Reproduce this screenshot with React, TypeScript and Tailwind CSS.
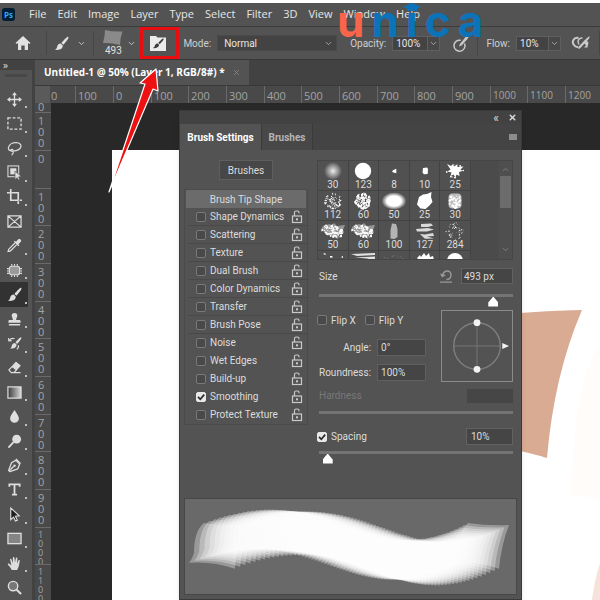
import React from "react";
import clsx from "clsx";
import { ChevronDown, ChevronUp, X } from "lucide-react";

const MENU = ["File", "Edit", "Image", "Layer", "Type", "Select", "Filter", "3D", "View", "Window", "Help"];

const H_TICKS = ["100", "0", "100", "200", "300", "400", "500", "600", "700", "800", "900", "1000", "1100", "1200"];
const V_TICKS = ["100", "0", "100", "200", "300", "400", "500", "600", "700", "800", "900", "1000", "1100"];

const OPTIONS = [
  { name: "Shape Dynamics", line: true },
  { name: "Scattering", line: true },
  { name: "Texture", line: true },
  { name: "Dual Brush", line: true },
  { name: "Color Dynamics", line: true },
  { name: "Transfer", line: true },
  { name: "Brush Pose", line: true },
  { name: "Noise" },
  { name: "Wet Edges" },
  { name: "Build-up" },
  { name: "Smoothing", checked: true },
  { name: "Protect Texture" },
];

const BRUSHES = [
  { kind: "soft", size: "30" },
  { kind: "hard", size: "123" },
  { kind: "tiny", size: "8" },
  { kind: "small", size: "10" },
  { kind: "splat", size: "25" },
  { kind: "grain", size: "112" },
  { kind: "round", size: "60" },
  { kind: "oval", size: "50" },
  { kind: "blob", size: "25" },
  { kind: "sponge", size: "30" },
  { kind: "rough", size: "50" },
  { kind: "rough", size: "60" },
  { kind: "finger", size: "100" },
  { kind: "dry", size: "127" },
  { kind: "spray", size: "284" },
  { kind: "dots", size: "" },
  { kind: "streak", size: "" },
  { kind: "faint", size: "" },
  { kind: "leaves", size: "" },
  { kind: "dome", size: "" },
];

// small repeatable noise, so the speckled tips look the same on each render
const noise = (n: number) => {
  const v = Math.sin(n * 127.1 + 11.7) * 43758.5453;
  return v - Math.floor(v);
};

const TOOLS: { name: string; icon: React.ReactNode; more?: boolean }[] = [
  {
    name: "Move", more: true,
    icon: (
      <g fill="currentColor" stroke="none">
        <path d="M7.300 3h1.400v10H7.300zM3 7.300h10v1.400H3z" />
        <path d="M8 0l2.600 3.400H5.400zM8 16l2.600-3.400H5.400zM0 8l3.400-2.600v5.200zM16 8l-3.400-2.600v5.200z" />
      </g>
    ),
  },
  { name: "Marquee", more: true, icon: <rect x="1" y="2" width="14" height="12" strokeDasharray="3 2" strokeWidth="1.4" /> },
  {
    name: "Lasso", more: true,
    icon: <path d="M5.5 10.6C2.5 10.8 1 9 1.6 6.8 2.4 3.6 6 1.6 10 1.8c3.400.2 5.400 2 4.900 4.200-.6 3-4.600 4.900-8.600 4.400M6.300 10.400c.4-1.700-2-2-2.200-.6-.1 1.400 2.800.8 2.600 2.600-.2 1.300-1.300 1.500-1.500 2.800" strokeWidth="1.3" />,
  },
  {
    name: "Object selection", more: true,
    icon: (
      <>
        <rect x="1" y="1" width="11.500" height="11.500" strokeWidth="1.100" />
        <rect x="3.500" y="3.500" width="6.500" height="6.500" fill="currentColor" stroke="none" />
        <path d="M8.500 6.500v9l2.300-2 1.600 2.500 1.400-.9-1.500-2.400 3-.5z" fill="currentColor" stroke="#535353" strokeWidth=".7" />
      </>
    ),
  },
  { name: "Crop", more: true, icon: <path d="M4 0v12h8.500M0 4h3M5 4h7v7.500M12 13v3M13.500 12H16" strokeWidth="1.800" /> },
  { name: "Frame", icon: <path d="M1 2h14v12H1zM1 2l14 12M15 2L1 14" strokeWidth="1.300" /> },
  {
    name: "Eyedropper", more: true,
    icon: (
      <>
        <path d="M8.500 5.300L2.200 11.600c-.8.8-.5 1.500-1 2.700 1.200-.2 2 0 2.700-.7l6.500-6.500" strokeWidth="1.300" />
        <path d="M7.300 4l1-1 1.300 1L12 1.400c1.600-1.500 4.200 1 2.700 2.700L12.200 6.600l1 1.300-1 1z" fill="currentColor" stroke="none" />
      </>
    ),
  },
  {
    name: "Healing patch", more: true,
    icon: (
      <>
        <rect x="2.500" y="3.500" width="11" height="9" rx="2.500" fill="#9a9a9a" strokeWidth="1.200" />
        <path d="M5 1v2M8 1v2M11 1v2M5 13v2M8 13v2M11 13v2M0 6h2M0 8.500h2M0 11h2M14 6h2M14 8.500h2M14 11h2" strokeWidth="1.200" />
      </>
    ),
  },
  {
    name: "Brush", more: true,
    icon: (
      <g fill="currentColor" stroke="none">
        <path d="M15.300 1c.8.800-1 3.300-5.300 8.300L7.900 7.400C11.800 3 14.500.2 15.300 1z" />
        <path d="M7.200 8.100l2.100 2c.5 3.200-3.600 5.600-8.300 4.400 2.400-.9 1.900-2.300 2.800-4.300.6-1.400 2-2.200 3.400-2.100z" />
      </g>
    ),
  },
  {
    name: "Clone stamp", more: true,
    icon: <path d="M8 1a3 3 0 013 3c0 1.700-1.300 2.500-1.300 4.500H13c1 0 1.500.6 1.500 1.500v1.500h-13V10c0-.9.500-1.500 1.500-1.500h3.300C6.300 6.500 5 5.700 5 4a3 3 0 013-3zM2 12.800h12v1.600H2z" fill="currentColor" stroke="none" />,
  },
  {
    name: "History brush", more: true,
    icon: (
      <>
        <path d="M15.300 1.500c.6.600-.9 2.900-4.500 6.900L9 6.700c3.300-3.700 5.700-5.800 6.300-5.200zM8.400 7.400l1.800 1.700c.3 2.900-3.200 4.900-7 4.200 2-.9 1.500-2.200 2.300-3.900.5-1.200 1.700-2 2.900-2z" fill="currentColor" stroke="none" />
        <path d="M2 5c1.500-2.500 3.700-3 6-2M1.600 2.200L2 5.200l3-.3M12 10c.8 1.500 0 3-1.500 4.200" strokeWidth="1.200" />
      </>
    ),
  },
  {
    name: "Eraser", more: true,
    icon: (
      <>
        <path d="M9.600 2.500l4.400 3.600-4 4.400L5.500 7z" fill="currentColor" strokeWidth="1.200" strokeLinejoin="round" />
        <path d="M5.500 7L2 10.600l2.500 2.900h3L10 10.500M7 13.500h7.500" strokeWidth="1.300" strokeLinejoin="round" />
      </>
    ),
  },
  {
    name: "Gradient", more: true,
    icon: (
      <>
        <defs>
          <linearGradient id="tool-gradient">
            <stop offset="0" stopColor="#3a3a3a" />
            <stop offset="1" stopColor="#d8d8d8" />
          </linearGradient>
        </defs>
        <rect x="1" y="2" width="14" height="12" fill="url(#tool-gradient)" strokeWidth="1.300" />
      </>
    ),
  },
  { name: "Blur", more: true, icon: <path d="M8 1c2 3.500 4.700 6 4.700 9a4.700 4.700 0 01-9.400 0C3.300 7 6 4.500 8 1z" fill="currentColor" stroke="none" /> },
  {
    name: "Dodge", more: true,
    icon: (
      <>
        <circle cx="10.300" cy="5.500" r="4.700" fill="currentColor" stroke="none" />
        <path d="M7 8.700L1.500 14.500" strokeWidth="2" />
      </>
    ),
  },
  {
    name: "Pen", more: true,
    icon: (
      <>
        <path d="M9.500 2.500l4 4-2 5L3 14.500 1.700 13.200 5 4.800z" strokeWidth="1.400" strokeLinejoin="round" />
        <path d="M2 14l5-5M9.500 1l5 5" strokeWidth="1.500" />
        <circle cx="8" cy="8.300" r="1.300" fill="currentColor" stroke="none" />
      </>
    ),
  },
  { name: "Type", more: true, icon: <path d="M2.500 5V2.500h11V5M8 2.500v11M5.300 13.500h5.400" strokeWidth="1.900" /> },
  { name: "Path selection", more: true, icon: <path d="M4 1v12.500l3-2.700 2 4.200 2-1-2-4.200 4-.3z" fill="#1d1d1d" strokeWidth="1.200" /> },
  { name: "Rectangle", more: true, icon: <rect x="1" y="2.500" width="14" height="11" fill="#858585" strokeWidth="1.400" /> },
  {
    name: "Hand", more: true,
    icon: (
      <path d="M5 14.800C4 13 2.800 11 1 9.300c-.5-1 .7-1.700 1.500-1L4.700 10 3.300 4c-.2-1.300 1.300-1.500 1.600-.4l1.400 4L6.200 2c0-1.300 1.700-1.300 1.800 0l.5 5.300.9-4.900c.3-1.200 1.800-.9 1.700.3l-.5 5.500 1.500-3.500c.5-1 1.800-.5 1.500.6-.6 3-.6 6-2.800 9.500z" fill="currentColor" stroke="none" />
    ),
  },
  {
    name: "Zoom",
    icon: (
      <>
        <circle cx="6.500" cy="6.500" r="5" fill="#777" strokeWidth="1.500" />
        <path d="M10.300 10.300l4.700 4.700" strokeWidth="2.200" />
      </>
    ),
  },
];

function Icon({ className, children }: { className?: string; children: React.ReactNode }) {
  return (
    <svg viewBox="0 0 16 16" fill="none" stroke="currentColor" aria-hidden="true" className={clsx("shrink-0 overflow-visible", className)}>
      {children}
    </svg>
  );
}

function BrushGlyph({ className }: { className?: string }) {
  return (
    <Icon className={className}>
      <path d="M15.300 1c.8.800-1 3.300-5.300 8.300L7.900 7.400C11.800 3 14.500.2 15.300 1z" fill="currentColor" stroke="none" />
      <path d="M7.200 8.100l2.100 2c.5 3.200-3.600 5.600-8.300 4.400 2.400-.9 1.900-2.300 2.800-4.300.6-1.400 2-2.200 3.400-2.100z" fill="currentColor" stroke="none" />
    </Icon>
  );
}

function Checkbox({ id, checked }: { id: string; checked?: boolean }) {
  return (
    <span className="relative flex h-[10px] w-[10px] shrink-0">
      <input
        id={id}
        type="checkbox"
        defaultChecked={checked}
        className="peer h-full w-full appearance-none rounded-[2px] border border-[#7a7a7a] bg-[#494949] checked:border-[#e8e8e8] checked:bg-[#e8e8e8]"
      />
      <svg viewBox="0 0 10 10" fill="none" aria-hidden="true" className="pointer-events-none absolute inset-0 hidden peer-checked:block">
        <path d="M2 4.800l2.300 2.500L8.200 2.600" stroke="#2b2b2b" strokeWidth="1.700" />
      </svg>
    </span>
  );
}

function LockButton({ label }: { label: string }) {
  return (
    <button type="button" aria-label={"Lock " + label} className="text-[#c9c9c9]">
      <svg viewBox="0 0 12 14" fill="none" stroke="currentColor" className="h-[14px] w-[12px]">
        <rect x="1.500" y="6" width="9" height="6.500" strokeWidth="1.200" />
        <path d="M3.500 6V2.500c0-1 .5-1.500 1.500-1.500h1.500C7.500 1 8 1.500 8 2.500V3.300" strokeWidth="1.200" />
        <rect x="5" y="8.300" width="2" height="2" fill="currentColor" stroke="none" />
      </svg>
    </button>
  );
}

function Slider({ label, value, off }: { label: string; value: number; off?: boolean }) {
  return (
    <input
      type="range"
      aria-label={label}
      defaultValue={value}
      disabled={off}
      className={clsx(
        "block h-[14px] w-full appearance-none bg-transparent [&::-webkit-slider-runnable-track]:h-[3px] [&::-webkit-slider-runnable-track]:bg-[#747474]",
        "[&::-webkit-slider-thumb]:mt-[3px] [&::-webkit-slider-thumb]:h-[10px] [&::-webkit-slider-thumb]:w-[10px] [&::-webkit-slider-thumb]:appearance-none [&::-webkit-slider-thumb]:bg-white [&::-webkit-slider-thumb]:[clip-path:polygon(50%_0,100%_60%,100%_100%,0_100%,0_60%)]",
        off && "[&::-webkit-slider-thumb]:opacity-0"
      )}
    />
  );
}

function Speckle({ seed, count, rx, ry, r, tilt = 0 }: { seed: number; count: number; rx: number; ry: number; r: number; tilt?: number }) {
  return (
    <g fill="#fff">
      {Array.from({ length: count }, (_, i) => {
        const a = noise(seed + i) * Math.PI * 2;
        const d = Math.sqrt(noise(seed + i + 500));
        const x = Math.cos(a) * d * rx;
        return <circle key={i} cx={12 + x} cy={9 + Math.sin(a) * d * ry + x * tilt} r={r * (0.4 + noise(seed + i + 900))} />;
      })}
    </g>
  );
}

function BrushTip({ kind }: { kind: string }) {
  switch (kind) {
    case "soft":
      return (
        <>
          <defs>
            <radialGradient id="soft-tip">
              <stop offset="0" stopColor="#fff" stopOpacity=".9" />
              <stop offset=".5" stopColor="#fff" stopOpacity=".45" />
              <stop offset="1" stopColor="#fff" stopOpacity="0" />
            </radialGradient>
          </defs>
          <circle cx="12" cy="9" r="9" fill="url(#soft-tip)" />
        </>
      );
    case "hard":
      return <circle cx="12" cy="9" r="8.200" fill="#fff" />;
    case "tiny":
      return <path d="M10 9.500l1.300-1.500 3-1.200v4.500l-3-.8z" fill="#fff" />;
    case "small":
      return <path d="M10 6l4-.5 1 1.500-.3 5-3.700.3-1.500-1.500z" fill="#fff" />;
    case "splat":
      return (
        <g fill="#fff">
          <path d="M4 2l4 2 2-2 1 2.500 3-2 .5 2.500 6-.5-3 3 2 1.500-3.500 1 .5 4-3-1.500-1 3-2-3-3 1.500 1-3.500-4-1 3-2z" />
          <Speckle seed={4} count={14} rx={9} ry={7} r={0.8} />
        </g>
      );
    case "grain":
      return <Speckle seed={20} count={120} rx={9} ry={8} r={0.5} />;
    case "round":
      return <Speckle seed={61} count={190} rx={8} ry={8} r={0.7} />;
    case "oval":
      return (
        <>
          <defs>
            <radialGradient id="oval-tip">
              <stop offset=".6" stopColor="#fff" />
              <stop offset="1" stopColor="#fff" stopOpacity=".1" />
            </radialGradient>
          </defs>
          <ellipse cx="12" cy="9" rx="12" ry="8.500" fill="url(#oval-tip)" />
        </>
      );
    case "blob":
      return <path d="M6 5l4-2.500 4-.5 4.500-2-.5 5 1.500 5-3.500 4-3.500 3-5-.5-3.500-4z" fill="#fff" />;
    case "sponge":
      return (
        <g>
          <rect x="5.500" y="1.500" width="13" height="15" rx="4" fill="#bdbdbd" />
          <Speckle seed={90} count={50} rx={6} ry={7} r={0.9} />
        </g>
      );
    case "rough":
      return (
        <g>
          <path d="M1 5l7-3 3 1 2-2 3 3 8-1-2 5 1 3-5 2-1 4-6-3-5-1-4-4-2 1z" fill="#cfcfcf" opacity=".55" />
          <Speckle seed={130} count={90} rx={11} ry={6} r={0.8} tilt={0.2} />
        </g>
      );
    case "finger":
      return <path d="M10 1.500l4 .5 1.500 5v8l-3 2-4-.5V8z" fill="#b4b4b4" />;
    case "dry":
      return <path d="M8 2l10-.5 2 2-5 1.500-7 0zM3 7l12-1 6 1.500-7 2-10 0zM7 12l5 .5 8-1.500 1 3-7 .5 7 2-9 .3-3-2.800z" fill="#dadada" />;
    case "spray":
      return <Speckle seed={210} count={55} rx={9} ry={8.500} r={0.45} />;
    case "dots":
      return <path d="M2 2l2-1 1 2zM9 4h2l1 1.500H9zM20 5l2-1v2z" fill="#fff" />;
    case "streak":
      return <path d="M0 2l24-1v2L6 4zM4 5.500l20-1v4l-8-2z" fill="#e2e2e2" />;
    case "faint":
      return <Speckle seed={310} count={50} rx={11} ry={7} r={0.22} />;
    case "leaves":
      return <path d="M4 6l3-3 1 2 3-4 2 3 3-3 1 4 3-1 1 4-4 1-2-2-3 3-2-3-3 2z" fill="#fff" />;
    default:
      return <path d="M4 9a8 8 0 0116 0z" fill="#fff" />;
  }
}

// brush stroke sample: one tip stamped many times along an S curve
function StrokePreview() {
  const stamps = Array.from({ length: 72 }, (_, i) => {
    const t = i / 71;
    const u = 1 - t;
    const at = (a: number, b: number, c: number, d: number) => u * u * u * a + 3 * u * u * t * b + 3 * u * t * t * c + t * t * t * d;
    return { x: at(19, 146, 176, 284), y: at(24, -25, 80, 24) };
  });
  return (
    <svg viewBox="0 0 332 95" role="img" aria-label="Stroke preview" className="block w-full">
      {stamps.map((s, i) => (
        <path
          key={i}
          d="M0 0Q20 3 41 2Q33 23 31 46Q8 38-15 40Q-12 37-10 30Q-10 8 0 0z"
          transform={`translate(${s.x} ${s.y})`}
          fill="#fff"
          opacity=".32"
        />
      ))}
    </svg>
  );
}

function MenuBar() {
  return (
    <nav className="flex h-[24px] items-center border-b border-[#3c3c3c] pl-[2px] text-[11px] text-[#e6e6e6]">
      <span className="mr-[14px] flex h-[13px] w-[13px] items-center justify-center rounded-[3px] bg-[#001e36] text-[8px] font-bold text-[#31a8ff]">Ps</span>
      <div className="flex gap-[11px]">
        {MENU.map((item) => (
          <button type="button" key={item}>{item}</button>
        ))}
      </div>
    </nav>
  );
}

function PercentBox({ label, value, width }: { label: string; value: string; width: string }) {
  return (
    <div className="flex shrink-0 items-center text-[10px]">
      <label htmlFor={label} className="mr-[6px] text-[#cfcfcf]">{label}:</label>
      <input id={label} defaultValue={value} className={clsx("h-[15px] border border-[#5f5f5f] bg-[#434343] px-[3px] text-[#e6e6e6]", width)} />
      <button type="button" aria-label={label + " slider"} className="flex h-[15px] w-[12px] items-center justify-center border border-l-0 border-[#5f5f5f] bg-[#484848] text-[#bdbdbd]">
        <ChevronDown size={9} />
      </button>
    </div>
  );
}

function OptionsBar() {
  return (
    <div className="flex h-[33px] items-center border-b border-[#383838] font-['Roboto','Noto_Sans',sans-serif] text-[10px] text-[#e2e2e2]">
      <button type="button" aria-label="Home" className="ml-[15px] mr-[15px]">
        <Icon className="h-[16px] w-[16px]">
          <path d="M8 1l7.500 7-1.200 1L13 8v7H9.700v-4.500H6.300V15H3V8L1.700 9 .5 8z" fill="currentColor" stroke="none" />
        </Icon>
      </button>
      <span className="h-[24px] w-px bg-[#464646]" />
      <button type="button" aria-label="Brush tool" className="ml-[8px] flex items-center gap-[8px]">
        <BrushGlyph className="h-[15px] w-[15px]" />
        <ChevronDown size={9} />
      </button>
      <span className="ml-[7px] h-[24px] w-px bg-[#464646]" />
      <button type="button" aria-label="Brush preset" className="ml-[10px] flex items-center gap-[4px]">
        <span className="flex w-[20px] flex-col items-center">
          <svg viewBox="0 0 20 15" className="h-[15px] w-[20px]">
            <path d="M2 0Q10 2 19.500 1.500Q17 8 17 15Q8 12.500 0 13Q2 6 2 0z" fill="#8a8a8a" />
          </svg>
          <span className="leading-[12px]">493</span>
        </span>
        <ChevronDown size={9} />
      </button>
      <div className="relative ml-[13px] flex h-[22px] w-[18px] shrink-0 items-center">
        <button type="button" aria-label="Toggle brush settings panel" className="text-[#3c3c3c]">
          <svg viewBox="0 0 18 18" className="h-[18px] w-[18px]">
            <path d="M1 2h6l1.500 1.500H17V17H1z" fill="#ececec" />
            <path d="M14.500 4.500c.8.800-.9 2.500-3.700 5.700L9.200 8.800C11.900 6 13.800 3.900 14.500 4.500zM8.700 9.500l1.300 1.300c.3 2-2.400 4-6 3.200 1.800-.7 1.500-1.500 2.100-2.900.5-1.100 1.500-1.700 2.600-1.600z" fill="currentColor" />
          </svg>
        </button>
        <span className="absolute -left-[9px] -top-[5px] h-[32px] w-[39px] border-[3px] border-[#e80d10]" />
      </div>
      <label htmlFor="mode" className="ml-[16px] mr-[6px] text-[#cfcfcf]">Mode:</label>
      <span className="relative mr-[13px] flex w-[120px] shrink-0 items-center">
        <select id="mode" defaultValue="Normal" className="h-[16px] w-full appearance-none border border-[#4a4a4a] bg-[#434343] pl-[6px] text-[#e6e6e6]">
          <option>Normal</option>
          <option>Dissolve</option>
          <option>Multiply</option>
        </select>
        <ChevronDown size={9} className="pointer-events-none absolute right-[4px] text-[#bdbdbd]" />
      </span>
      <PercentBox label="Opacity" value="100%" width="w-[36px]" />
      <button type="button" aria-label="Pressure for opacity" className="ml-[12px] text-[#c9c9c9]">
        <Icon className="h-[17px] w-[17px]">
          <path d="M11.800 8A5.200 5.200 0 118.200 5" strokeWidth="1.400" />
          <path d="M15.400.6c.9.800-2.200 3.800-6.600 8.800L7.500 10l.5-1.500C11.500 4.500 14.600-.2 15.400.6z" fill="currentColor" />
        </Icon>
      </button>
      <span className="ml-[8px] h-[24px] w-px bg-[#464646]" />
      <span className="ml-[9px] flex shrink-0">
        <PercentBox label="Flow" value="10%" width="w-[33px]" />
      </span>
      <button type="button" aria-label="Airbrush" className="ml-[10px] shrink-0 text-[#c9c9c9]">
        <svg viewBox="0 0 20 14" fill="none" stroke="currentColor" className="h-[14px] w-[20px]">
          <path d="M7.500 2C2.500.8.500 6 3 9c1 1.500 2.500 2.200 4 2" strokeWidth="2" />
          <path d="M11.500 2C7 1.500 6 6 8 8.500" strokeWidth="1.500" />
          <path d="M18.500.5c.8.800-2 3.500-2.500 4.500l1.500 1.500-1 5H13l2-2-1.500-2L9 12.500l-2 .3.500-2C10.500 7.500 17.500-.4 18.500.5z" fill="currentColor" stroke="none" />
        </svg>
      </button>
      <span className="ml-[8px] h-[24px] w-px shrink-0 bg-[#464646]" />
    </div>
  );
}

function Toolbar() {
  return (
    <aside className="flex w-[32px] shrink-0 flex-col bg-[#535353] text-[#dedede]">
      <button type="button" aria-label="Collapse tools" className="h-[10px] shrink-0 bg-[#424242] pl-[3px] text-left text-[10px] leading-[8px]">»</button>
      <span className="mx-[5px] mb-[10px] mt-[4px] h-[3px] shrink-0 bg-[#474747]" />
      {TOOLS.map((tool) => (
        <button
          type="button"
          key={tool.name}
          aria-label={tool.name}
          className={clsx("relative flex min-h-0 flex-1 items-center pl-[7px]", tool.name === "Brush" && "mr-[4px] bg-[#323232]")}
        >
          <Icon className="h-[15px] w-[15px]">{tool.icon}</Icon>
          {tool.more && <span className="absolute bottom-[3px] left-[25px] h-[2px] w-[2px] bg-[#c0c0c0]" />}
        </button>
      ))}
    </aside>
  );
}

function Rulers({ children }: { children: React.ReactNode }) {
  return (
    <div className="flex min-h-0 flex-1 flex-col text-[11px] text-[#a3a3a3]">
      <div className="flex h-[17px] shrink-0 overflow-hidden bg-[#494949]">
        <span className="w-[15px] shrink-0 bg-[#5a5a5a]" />
        <span className="w-[25px] shrink-0 pl-px leading-[19px]">0</span>
        {H_TICKS.map((tick, i) => (
          <span
            key={i}
            className={clsx(
              "shrink-0 border-l border-[#6a6a6a] pl-[2px] leading-[19px]",
              i % 3 === 2 ? "w-[37px]" : "w-[38px]",
              tick.length > 3 && "text-[10px]"
            )}
          >
            {tick}
          </span>
        ))}
      </div>
      <div className="flex min-h-0 flex-1">
        <div className="flex w-[16px] shrink-0 flex-col overflow-hidden bg-[#494949]">
          <span className="h-[9px] shrink-0 pl-[3px] leading-[8px]">0</span>
          {V_TICKS.map((tick, i) => (
            <span
              key={i}
              className={clsx(
                "flex shrink-0 flex-col border-t border-[#6a6a6a] pl-[3px] pt-[2px]",
                i % 3 === 2 ? "h-[37px]" : "h-[38px]",
                tick.length > 3 ? "text-[9px] leading-[9px]" : "leading-[11px]"
              )}
            >
              {tick.split("").map((digit, j) => (
                <span key={j}>{digit}</span>
              ))}
            </span>
          ))}
        </div>
        {children}
      </div>
    </div>
  );
}

function ArtBoard() {
  return (
    <div className="ml-[61px] mt-[47px] flex-1 overflow-hidden bg-white">
      <svg viewBox="0 0 488 450" preserveAspectRatio="xMinYMin slice" className="h-full w-full" aria-hidden="true">
        <path d="M380 165Q430 161 470 160Q442 225 435 308Q415 302 380 295z" fill="#d9ab93" />
        <path d="M488 195C465 225 460 300 460 345C474 345 480 350 488 350z" fill="#fffcfa" />
        <path d="M488 413Q482 432 480 450H488z" fill="#f5e2da" />
      </svg>
    </div>
  );
}

function BrushPanel() {
  return (
    <section aria-label="Brush Settings" className="absolute bottom-0 left-[128px] top-[7px] flex w-[343px] flex-col border border-[#3a3a3a] bg-[#535353] font-['Roboto','Noto_Sans',sans-serif] text-[10px] text-[#dcdcdc] shadow-md">
      <header className="flex h-[13px] shrink-0 items-center justify-end gap-[9px] bg-[#424242] pr-[4px] text-[#d8d8d8]">
        <button type="button" aria-label="Collapse panel" className="text-[12px] leading-[10px]">«</button>
        <button type="button" aria-label="Close panel"><X size={9} strokeWidth={4} /></button>
      </header>
      <div role="tablist" className="flex h-[26px] shrink-0 items-stretch bg-[#444444] font-bold">
        <button type="button" role="tab" aria-selected="true" className="w-[81px] bg-[#535353] text-white">Brush Settings</button>
        <button type="button" role="tab" aria-selected="false" className="w-[52px] border-x border-[#3a3a3a] bg-[#484848] text-[#b4b4b4]">Brushes</button>
        <button type="button" aria-label="Panel menu" className="ml-auto mr-[4px] self-center">
          <span className="block h-[6px] w-[8px] bg-[#8d8d8d]" />
        </button>
      </div>

      <div className="flex gap-[9px] pl-[4px] pr-[8px] pt-[10px]">
        <div className="w-[124px] shrink-0">
          <button type="button" className="mx-auto block h-[20px] w-[54px] border border-[#5e5e5e] bg-[#474747]">Brushes</button>
          <div className="mt-[9px] border border-[#4b4b4b]">
            <button type="button" className="mx-[1px] block h-[18px] w-[120px] bg-[#6b6b6b]">Brush Tip Shape</button>
            {OPTIONS.map(({ name, line, checked }) => (
              <div key={name} className={clsx("ml-[3px] flex h-[18px] items-center border-b pl-[8px] pr-[4px]", line ? "border-[#494949]" : "border-transparent")}>
                <Checkbox id={name} checked={checked} />
                <label htmlFor={name} className="ml-[4px] flex-1 whitespace-nowrap">{name}</label>
                <LockButton label={name} />
              </div>
            ))}
          </div>
        </div>

        <div className="flex-1">
          <div className="flex h-[100px] overflow-hidden border border-[#464646] bg-[#4b4b4b]">
            <div className="grid w-[153px] auto-rows-[30px] grid-cols-5">
              {BRUSHES.map(({ kind, size }, i) => (
                <button type="button" key={i} aria-label={"Brush " + kind} className="flex flex-col items-center border-b border-r border-[#434343] bg-[#515151] pt-px">
                  <svg viewBox="0 0 24 18" className="h-[18px] w-[24px] shrink-0"><BrushTip kind={kind} /></svg>
                  <span className="leading-[10px]">{size}</span>
                </button>
              ))}
            </div>
            <div className="ml-auto flex w-[13px] flex-col items-center bg-[#4f4f4f] pb-[5px] pt-[4px] text-[#8a8a8a]">
              <ChevronUp size={9} />
              <span className="mt-[2px] h-[32px] w-[11px] bg-[#6c6c6c]" />
              <ChevronDown size={9} className="mt-auto" />
            </div>
          </div>

          <div className="mt-[8px] flex items-center pl-[2px]">
            <label htmlFor="size" className="flex-1">Size</label>
            <button type="button" aria-label="Reset size" className="mr-[9px] text-[#9a9a9a]">
              <svg viewBox="0 0 12 13" fill="none" stroke="currentColor" className="h-[13px] w-[12px]">
                <path d="M2.500 5.500C4-.5 11-.2 11 5c0 2.500-1.500 4.500-4.500 4.500" strokeWidth="1.400" />
                <path d="M0 3.500l2 4 4-2.500zM0 11.500h12v1.200H0z" fill="currentColor" stroke="none" />
              </svg>
            </button>
            <input id="size" defaultValue="493 px" className="h-[16px] w-[52px] border border-[#626262] bg-[#454545] px-[2px]" />
          </div>
          <div className="mt-[4px] pl-[2px]"><Slider label="Size slider" value={92} /></div>

          <div className="mt-[8px] flex justify-between">
            <div className="flex flex-col items-start">
              <div className="mt-[2px] flex h-[16px] items-center">
                <Checkbox id="flip-x" />
                <label htmlFor="flip-x" className="ml-[4px] mr-[9px]">Flip X</label>
                <Checkbox id="flip-y" />
                <label htmlFor="flip-y" className="ml-[4px]">Flip Y</label>
              </div>
              <div className="mt-[11px] grid grid-cols-[auto_49px] items-center gap-x-[6px] gap-y-[8px] pl-[2px] text-right">
                <label htmlFor="angle">Angle:</label>
                <input id="angle" defaultValue="0°" className="h-[17px] w-full border border-[#5f5f5f] bg-[#454545] px-[3px] text-left" />
                <label htmlFor="roundness">Roundness:</label>
                <input id="roundness" defaultValue="100%" className="h-[17px] w-full border border-[#5f5f5f] bg-[#454545] px-[3px] text-left" />
              </div>
            </div>
            <svg viewBox="0 0 72 72" fill="none" className="h-[72px] w-[72px] border border-[#8a8a8a]" role="img" aria-label="Angle and roundness">
              <path d="M12 36h48M36 12v48" stroke="#767676" />
              <circle cx="36" cy="36" r="24" stroke="#7d7d7d" strokeWidth="1.500" />
              <circle cx="36" cy="12" r="3.500" fill="#f2f2f2" />
              <circle cx="36" cy="60" r="3.500" fill="#f2f2f2" />
              <path d="M62 33l7 3-7 3z" fill="#f2f2f2" />
            </svg>
          </div>

          <div className="mt-[6px] flex items-center justify-between pl-[2px] text-[#787878]">
            <label htmlFor="hardness">Hardness</label>
            <input id="hardness" disabled className="h-[14px] w-[46px] bg-[#464646]" />
          </div>
          <div className="mt-[2px] pl-[2px]"><Slider label="Hardness slider" value={0} off /></div>

          <div className="mt-[9px] flex items-center">
            <Checkbox id="spacing-on" checked />
            <label htmlFor="spacing-on" className="ml-[4px] flex-1">Spacing</label>
            <input aria-label="Spacing value" defaultValue="10%" className="h-[17px] w-[47px] border border-[#626262] bg-[#454545] px-[4px]" />
          </div>
          <div className="pl-[2px]"><Slider label="Spacing slider" value={2} /></div>
        </div>
      </div>

      <div className="mx-[4px] mb-[4px] mt-auto border border-[#474747] bg-[#696969]">
        <StrokePreview />
      </div>
    </section>
  );
}

function Watermark() {
  return (
    <div className="pointer-events-none absolute left-[337px] top-0 flex gap-[7px] font-[Inter,sans-serif] text-[44px] font-bold leading-[42px] text-[#0d73b9]">
      <span className="text-[#f9654b]">u</span>
      <span>n</span>
      <span className="relative">
        i
        <svg viewBox="0 0 18 8" className="absolute -left-[3px] top-[3px] h-[8px] w-[18px]" aria-hidden="true">
          <path d="M9 0l9 4-4 1.500V8H4V5.500L0 4z" fill="currentColor" />
        </svg>
      </span>
      <span>c</span>
      <span>a</span>
    </div>
  );
}

export default function App() {
  return (
    <div className="relative flex h-screen flex-col overflow-hidden bg-white pt-[3px] font-['Open_Sans','Noto_Sans',sans-serif]">
      <div className="shrink-0 bg-[#535353]">
        <MenuBar />
        <OptionsBar />
      </div>
      <div className="flex min-h-0 flex-1 bg-[#424242]">
        <Toolbar />
        <main className="ml-[3px] flex min-w-0 flex-1 flex-col">
          <div role="tablist" className="flex h-[26px] shrink-0 items-stretch border-b border-[#383838]">
            <div className="flex items-center bg-[#535353] pl-[9px] pr-[8px]">
              <button type="button" role="tab" aria-selected="true" className="text-[10px] font-bold text-white">Untitled-1 @ 50% (Layer 1, RGB/8#) *</button>
              <button type="button" aria-label="Close document" className="ml-[7px] text-[#8d8d8d]"><X size={9} /></button>
            </div>
          </div>
          <Rulers>
            <div className="relative flex min-w-0 flex-1 bg-[#282828]">
              <ArtBoard />
              <BrushPanel />
            </div>
          </Rulers>
        </main>
      </div>
      <Watermark />
      <svg viewBox="0 0 60 130" className="pointer-events-none absolute left-[104px] top-[66px] h-[130px] w-[60px]" aria-hidden="true">
        <path d="M5 126L41 18L36 17L52 3L54 25L49 23z" fill="#ee1111" stroke="#fff" strokeWidth="1.200" strokeLinejoin="round" />
      </svg>
    </div>
  );
}
